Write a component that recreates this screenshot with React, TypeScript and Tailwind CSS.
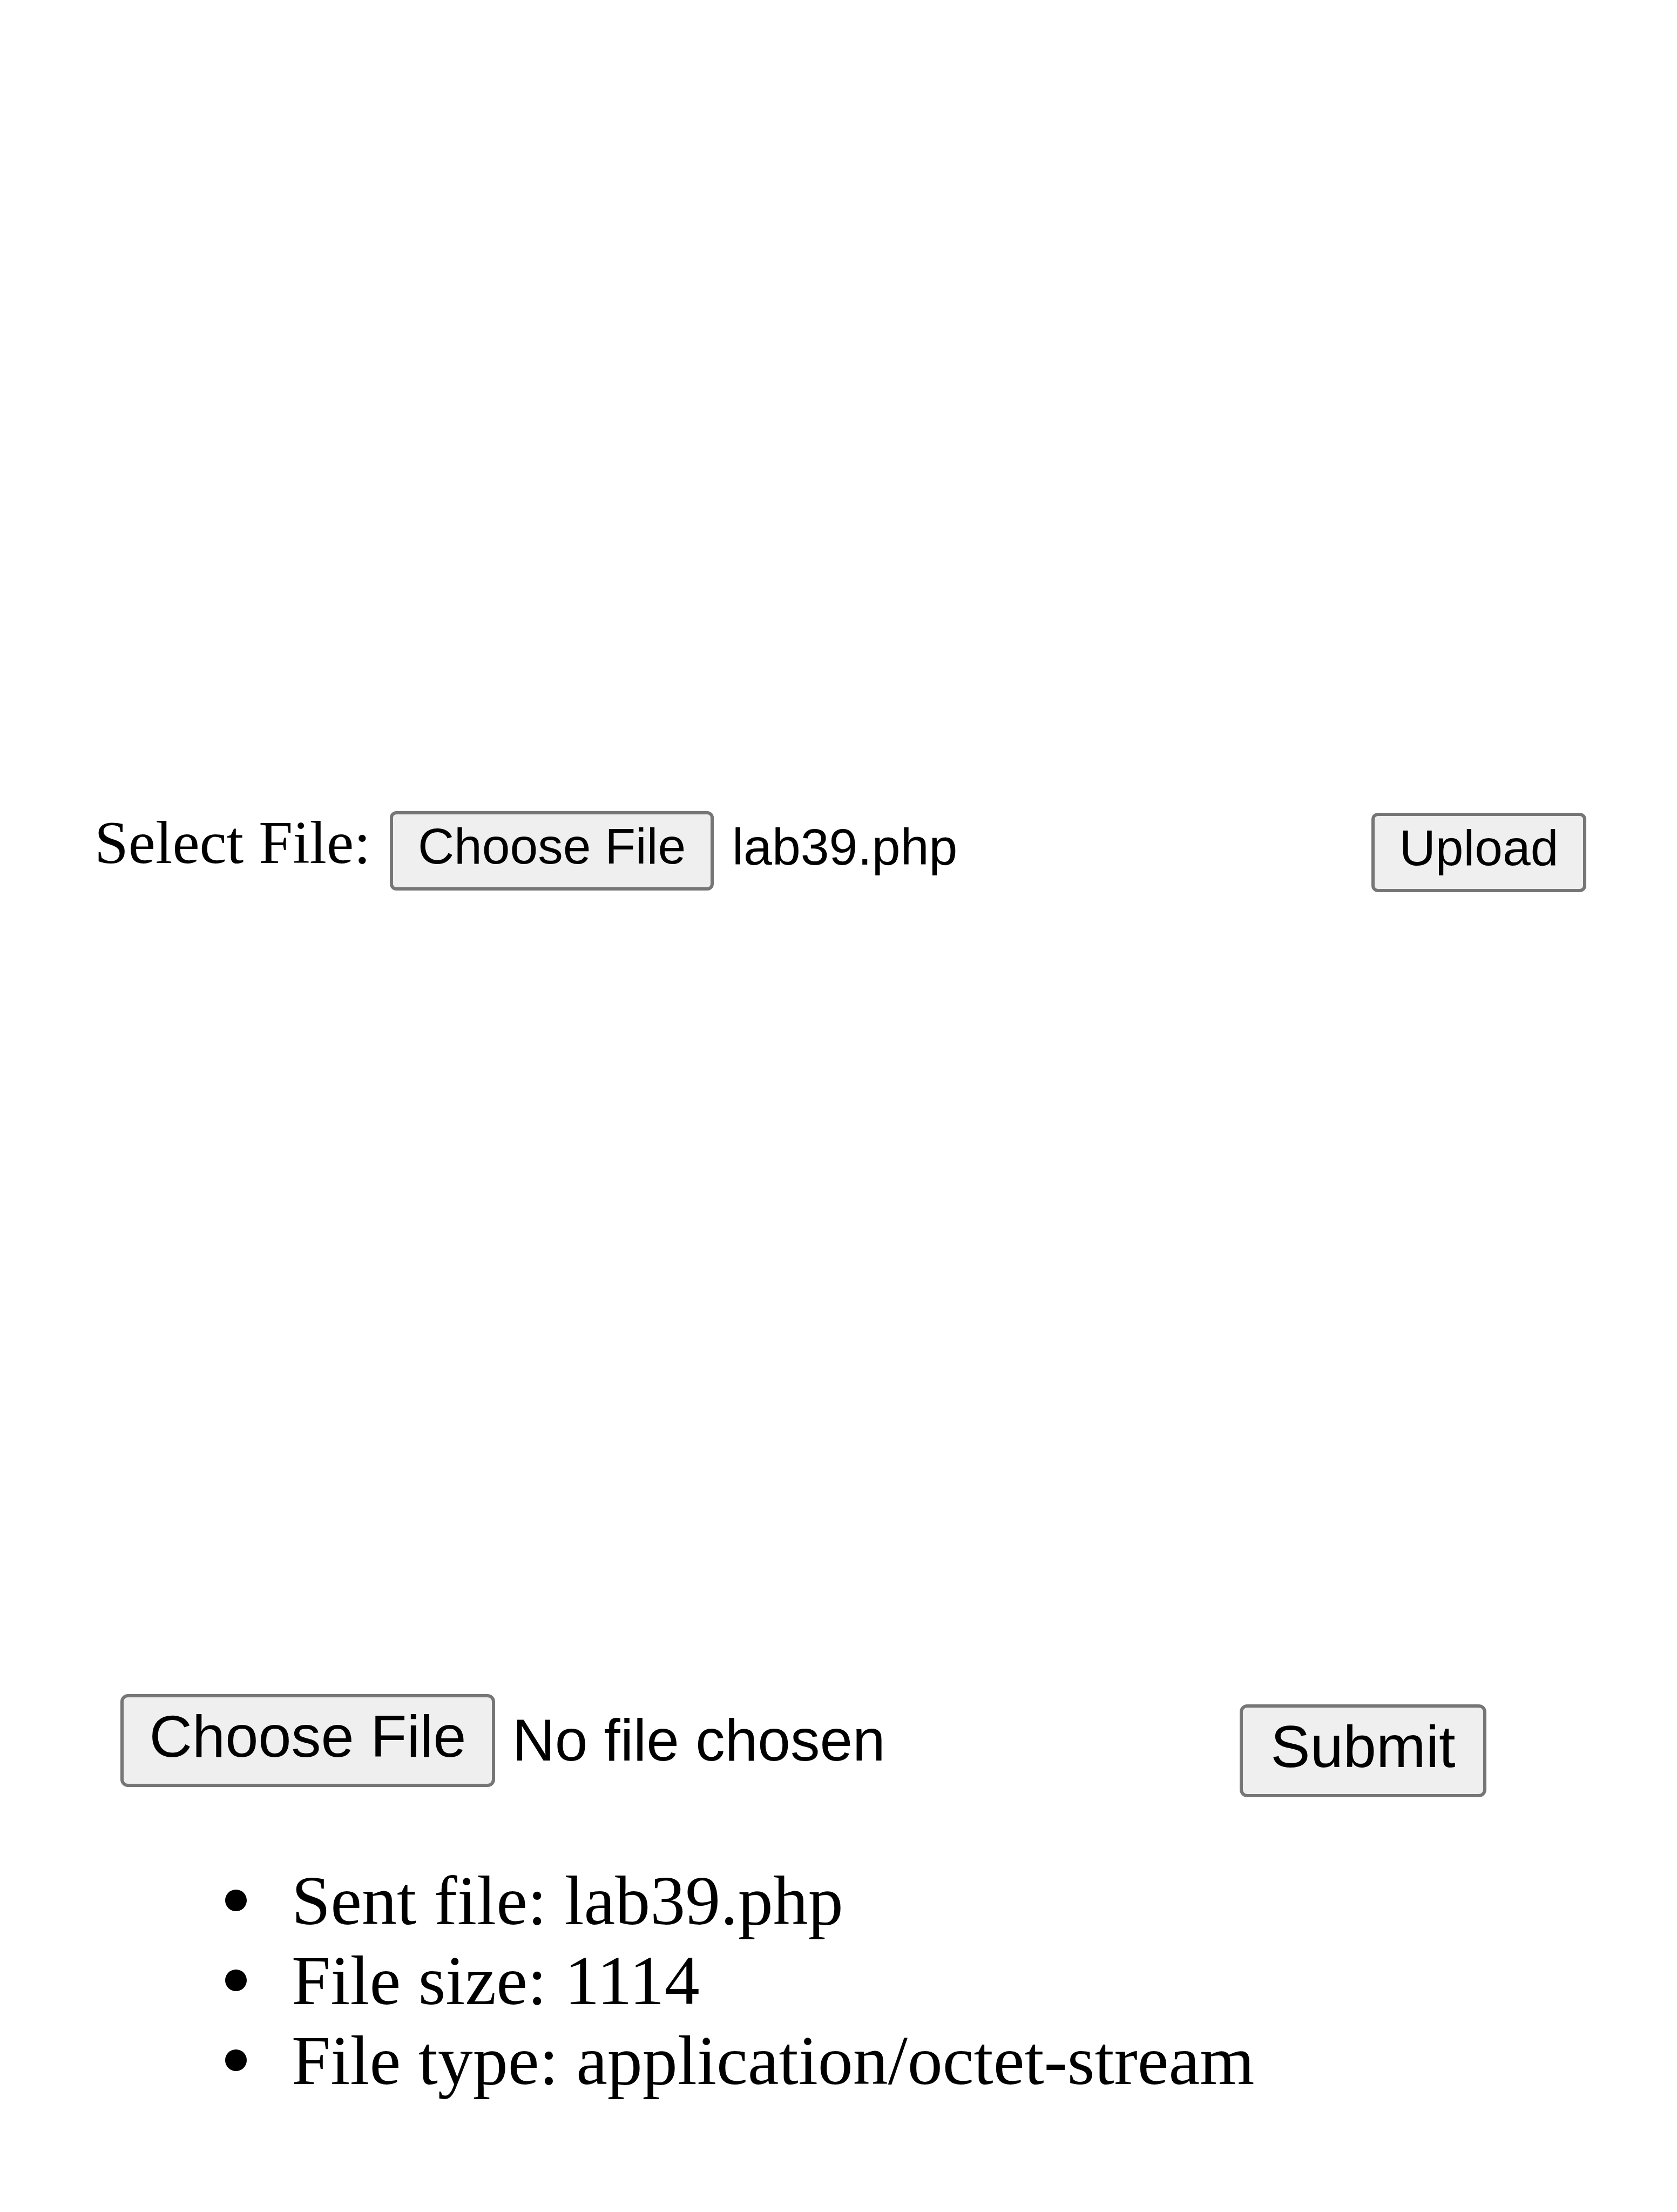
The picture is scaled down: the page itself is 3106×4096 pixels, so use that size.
import React from 'react';

const serif = "font-['Liberation_Serif','Times_New_Roman',serif]";
const sans = "font-['Liberation_Sans',Arial,sans-serif]";

interface FakeButtonProps {
  label: string;
  className: string;
}

// grey native-looking button, sizes passed in per row
function FakeButton({ label, className }: FakeButtonProps) {
  return (
    <button
      type="button"
      className={`box-border flex shrink-0 items-center justify-center bg-[#efefef] text-black leading-none ${sans} ${className}`}
    >
      {label}
    </button>
  );
}

export default function App() {
  const details = [
    'Sent file: lab39.php',
    'File size: 1114',
    'File type: application/octet-stream',
  ];

  return (
    <div className="w-[3106px] h-[4096px] overflow-hidden bg-white text-black">
      {/* Upload form */}
      <form className="flex items-start pt-[1498px] pl-[175px]">
        <span className={`w-[547px] shrink-0 text-[113px] leading-[124px] ${serif}`}>Select File:</span>
        <div className="flex w-[1818px] shrink-0 items-start">
          <FakeButton
            label="Choose File"
            className="mt-[4px] h-[147px] w-[600px] rounded-[12px] border-[6px] border-[#767676] pb-[16px] text-[93px]"
          />
          <span className={`ml-[34px] mt-[17px] text-[95px] leading-[106px] ${sans}`}>lab39.php</span>
        </div>
        <FakeButton
          label="Upload"
          className="mt-[7px] h-[147px] w-[398px] rounded-[12px] border-[6px] border-[#767676] pb-[16px] text-[93px]"
        />
      </form>

      {/* Second form */}
      <form className="mt-[1485px] flex items-start pl-[223px]">
        <div className="flex w-[2073px] shrink-0 items-start">
          <FakeButton
            label="Choose File"
            className="h-[172px] w-[694px] rounded-[14px] border-[6px] border-[#767676] pb-[16px] text-[110px]"
          />
          <span className={`ml-[32px] mt-[24px] text-[109px] leading-[122px] ${sans}`}>No file chosen</span>
        </div>
        <FakeButton
          label="Submit"
          className="mt-[19px] h-[172px] w-[457px] rounded-[14px] border-[6px] border-[#767676] pb-[16px] text-[110px]"
        />
      </form>

      {/* Result */}
      <ul className={`mt-[117px] pl-[417px] text-[130px] leading-[148px] ${serif}`}>
        {details.map((line) => (
          <li key={line} className="flex items-center">
            <span className="h-[40px] w-[40px] shrink-0 rounded-full bg-black" />
            <span className="ml-[83px]">{line}</span>
          </li>
        ))}
      </ul>
    </div>
  );
}
